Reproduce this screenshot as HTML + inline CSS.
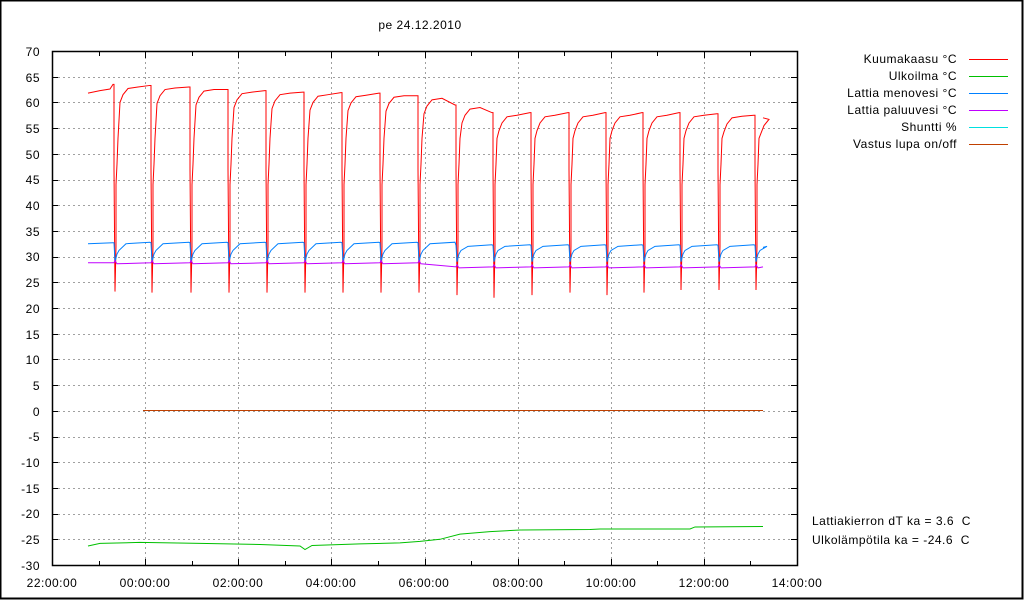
<!DOCTYPE html>
<html><head><meta charset="utf-8"><style>
html,body{margin:0;padding:0;background:#fff;}
svg{display:block;font-family:"Liberation Sans",sans-serif;font-size:12px;letter-spacing:0.5px;}
</style></head><body>
<svg id="s" width="1024" height="600" xmlns="http://www.w3.org/2000/svg">
<rect x="0.5" y="0.5" width="1022" height="598" fill="#fff" stroke="#000" stroke-width="2"/>
<g id="grid" stroke="#a0a0a0" stroke-dasharray="2,3" stroke-width="1"></g>
<g id="ticks" stroke="#000" stroke-width="1"></g>
<rect x="52.5" y="51.5" width="745" height="514" fill="none" stroke="#000" stroke-width="1.5"/>
<text x="420" y="29" text-anchor="middle">pe 24.12.2010</text>
<g text-anchor="end">
<text x="40" y="56">70</text><text x="40" y="82">65</text><text x="40" y="107">60</text><text x="40" y="133">55</text><text x="40" y="159">50</text><text x="40" y="184">45</text><text x="40" y="210">40</text><text x="40" y="236">35</text><text x="40" y="261">30</text><text x="40" y="287">25</text><text x="40" y="313">20</text><text x="40" y="339">15</text><text x="40" y="364">10</text><text x="40" y="390">5</text><text x="40" y="416">0</text><text x="40" y="441">-5</text><text x="40" y="467">-10</text><text x="40" y="493">-15</text><text x="40" y="518">-20</text><text x="40" y="544">-25</text><text x="40" y="570">-30</text>
</g>
<g text-anchor="middle">
<text x="52" y="587">22:00:00</text><text x="145" y="587">00:00:00</text><text x="238" y="587">02:00:00</text><text x="331" y="587">04:00:00</text><text x="424" y="587">06:00:00</text><text x="518" y="587">08:00:00</text><text x="611" y="587">10:00:00</text><text x="704" y="587">12:00:00</text><text x="797" y="587">14:00:00</text>
</g>
<g text-anchor="end">
<text x="957" y="63">Kuumakaasu °C</text>
<text x="957" y="80">Ulkoilma °C</text>
<text x="957" y="97">Lattia menovesi °C</text>
<text x="957" y="114">Lattia paluuvesi °C</text>
<text x="957" y="131">Shuntti %</text>
<text x="957" y="148">Vastus lupa on/off</text>
</g>
<line x1="969" y1="59.5" x2="1008" y2="59.5" stroke="#ff0000"/>
<line x1="969" y1="76.5" x2="1008" y2="76.5" stroke="#00c000"/>
<line x1="969" y1="93.5" x2="1008" y2="93.5" stroke="#0080ff"/>
<line x1="969" y1="110.5" x2="1008" y2="110.5" stroke="#c000ff"/>
<line x1="969" y1="127.5" x2="1008" y2="127.5" stroke="#00e0e0"/>
<line x1="969" y1="144.5" x2="1008" y2="144.5" stroke="#c04000"/>
<text x="812" y="525">Lattiakierron dT ka = 3.6&#160;&#160;C</text>
<text x="812" y="544">Ulkolämpötila ka = -24.6&#160;&#160;C</text>
<line x1="143" y1="410.5" x2="763" y2="410.5" stroke="#c04000"/>
<g id="curves" fill="none" stroke-width="1"></g>
</svg>
<script>
var NS="http://www.w3.org/2000/svg";
function Y(v){return 51+(70-v)*5.14;}
function el(p,tag,a){var e=document.createElementNS(NS,tag);for(var k in a)e.setAttribute(k,a[k]);p.appendChild(e);}
var g=document.getElementById('grid'),t=document.getElementById('ticks');
for(var i=1;i<20;i++){var y=Math.round(Y(70-5*i))+0.5;el(g,'line',{x1:53,y1:y,x2:797,y2:y});el(t,'line',{x1:52,y1:y,x2:58,y2:y});el(t,'line',{x1:791,y1:y,x2:797,y2:y});}
for(var i=1;i<8;i++){var x=Math.round(52+i*93.125)+0.5;el(g,'line',{x1:x,y1:52,x2:x,y2:565});el(t,'line',{x1:x,y1:565,x2:x,y2:559});el(t,'line',{x1:x,y1:52,x2:x,y2:58});}
for(var i=0;i<16;i++){var x=Math.round(52+i*46.56+46.56)+0.5;if(i%2==0){el(t,'line',{x1:x,y1:565,x2:x,y2:561});el(t,'line',{x1:x,y1:52,x2:x,y2:56});}}
var drops=[114,151,190,228,266,304,342,380,418,456,493,531,569,606,643,680,718,755];
var peaks=[63.5,63.3,63,62.5,62.3,62,61.9,61.8,61.3,59.5,58,58,58,58,58,58,57.8,57.5];
var mins=[23.2,23,23,23,23,23,23,23,23,22.5,22,22.5,23,22.5,23,23.5,23.5,23.5];
var c=document.getElementById('curves');
var d="M88 "+Y(61.8)+" L100 "+Y(62.3)+" L110 "+Y(62.6)+" L113 "+Y(63.5);
for(var i=0;i<drops.length;i++){var x0=drops[i],p=peaks[i];
d+=" L"+x0+" "+Y(p)+" L"+x0+" "+Y(47)+" L"+(x0+1)+" "+Y(mins[i])+" L"+(x0+2)+" "+Y(32)+" L"+(x0+2)+" "+Y(44)+" L"+(x0+3)+" "+Y(48)+" L"+(x0+4)+" "+Y(53)+" L"+(x0+6)+" "+Y(p-3.5)+" L"+(x0+9)+" "+Y(p-2)+" L"+(x0+14)+" "+Y(p-0.8);
if(i<drops.length-1){var n=drops[i+1];d+=" L"+(x0+24)+" "+Y(p-0.5)+" L"+(n-1)+" "+Y(peaks[i+1]);}
else{d+=" L763 "+Y(57);}}
el(c,'path',{d:d,stroke:"#ff0000"});
var b="M88 "+Y(32.5)+" L113 "+Y(32.7);
for(var i=0;i<drops.length;i++){var x0=drops[i],v=i<9?32.5:32;
b+=" L"+x0+" "+Y(v+0.2)+" L"+(x0+1)+" "+Y(29)+" L"+(x0+3)+" "+Y(30.5)+" L"+(x0+5)+" "+Y(31.2)+" L"+(x0+12)+" "+Y(v);
if(i<drops.length-1)b+=" L"+(drops[i+1]-1)+" "+Y(v+0.3);else b+=" L763 "+Y(31.8);}
el(c,'path',{d:b,stroke:"#0080ff"});
var m="M88 "+Y(28.8);
for(var i=0;i<drops.length;i++){var x0=drops[i],v=i<9?28.8:28;m+=" L"+x0+" "+Y(v)+" L"+(x0+1)+" "+Y(v+0.4)+" L"+(x0+3)+" "+Y(v-0.2);}
m+=" L763 "+Y(28);
el(c,'path',{d:m,stroke:"#c000ff"});
var gp=[[88,-26.3],[100,-25.8],[140,-25.6],[200,-25.8],[260,-26],[300,-26.3],[305,-27],[312,-26.2],[360,-25.9],[400,-25.7],[420,-25.4],[440,-25],[460,-24],[490,-23.5],[520,-23.2],[590,-23.1],[600,-23],[690,-23],[695,-22.6],[763,-22.5]];
var gd="M"+gp.map(function(p){return p[0]+" "+Y(p[1]);}).join(" L");
el(c,'path',{d:gd,stroke:"#00c000"});
</script>
</body></html>
